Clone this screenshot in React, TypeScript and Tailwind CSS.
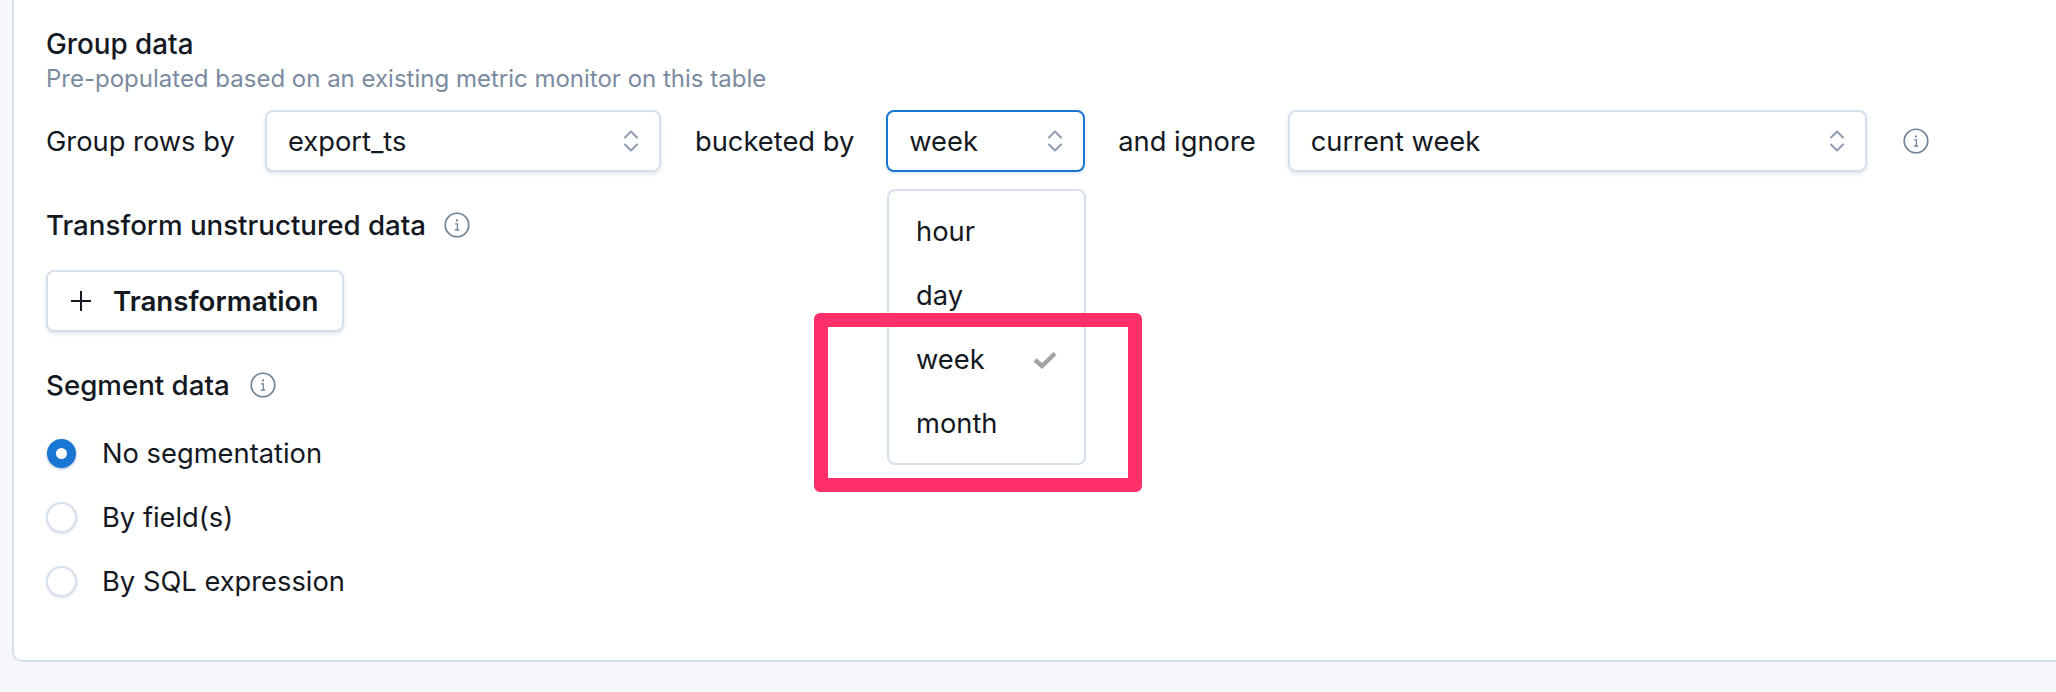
import React from "react";

const Chevrons = () => (
  <svg width="16" height="24" viewBox="0 0 16 24" fill="none" stroke="#8c9db1" strokeWidth="2" strokeLinecap="round" strokeLinejoin="round" className="shrink-0">
    <path d="M2 8.5 L8 2.5 L14 8.5" />
    <path d="M2 15.5 L8 21.5 L14 15.5" />
  </svg>
);

const Info = () => (
  <svg width="26" height="26" viewBox="0 0 26 26" fill="none" className="shrink-0">
    <circle cx="13" cy="13" r="11.75" stroke="#718297" strokeWidth="1.7" />
    <circle cx="13" cy="8.4" r="1.1" fill="#718297" />
    <path d="M11 11.8 H13.4 V17.8 M10.9 18 H15.2" stroke="#718297" strokeWidth="1.3" />
  </svg>
);

const Select = ({ value, width, focused }: { value: string; width: string; focused?: boolean }) => (
  <div
    className={`${width} h-[62px] shrink-0 rounded-[8px] bg-white flex items-center justify-between pl-[21px] pr-[20px] ${
      focused
        ? "border-2 border-[#1976d2] shadow-[0_2px_3px_rgba(25,118,210,0.15)]"
        : "border-2 border-[#d5e0ec] shadow-[0_2px_4px_rgba(120,145,175,0.22)]"
    }`}
  >
    <span className="pt-[2px]">{value}</span>
    <Chevrons />
  </div>
);

const Radio = ({ label, checked }: { label: string; checked?: boolean }) => (
  <div className="h-[64px] flex items-center">
    {checked ? (
      <span className="w-[29px] h-[29px] ml-[1px] mr-[26px] rounded-full bg-[#1976d2] flex items-center justify-center shadow-[0_1px_3px_rgba(60,100,150,0.45)]">
        <span className="w-[11px] h-[11px] rounded-full bg-white" />
      </span>
    ) : (
      <span className="w-[31px] h-[31px] mr-[25px] rounded-full bg-white border-2 border-[#d5e0ec] shadow-[0_1px_3px_rgba(120,145,175,0.25)]" />
    )}
    <span className="pt-[2px]">{label}</span>
  </div>
);

export default function App() {
  return (
    <div className="h-[692px] overflow-hidden bg-[#f5f7fb] pl-[12px] relative text-[27.3px] leading-[32px] text-[#14181f] font-['Inter',sans-serif]">
      <div className="h-[662px] bg-white border-l-2 border-b-2 border-[#d5e0ec] rounded-bl-[10px] pl-[32px] pt-[28px]">
        <div className="font-[450] text-[27.8px] h-[32px]">Group data</div>
        <div className="mt-[3px] h-[32px] text-[24px] text-[#7a8ba0]">Pre-populated based on an existing metric monitor on this table</div>

        <div className="mt-[15px] flex items-center gap-[32px]">
          <span className="w-[187px] pt-[2px] whitespace-nowrap">Group rows by</span>
          <Select value="export_ts" width="w-[396px]" />
          <span className="ml-[2px] pt-[2px]">bucketed by</span>
          <Select value="week" width="w-[199px]" focused />
          <span className="ml-[1px] pt-[2px]">and ignore</span>
          <div className="flex items-center gap-[36px]">
            <Select value="current week" width="w-[579px]" />
            <Info />
          </div>
        </div>

        <div className="mt-[37px] flex items-center gap-[18px] font-[450] text-[27.7px]">
          <span>Transform unstructured data</span>
          <Info />
        </div>

        <button className="mt-[29px] w-[298px] h-[62px] rounded-[8px] bg-white border-2 border-[#d5e0ec] shadow-[0_2px_4px_rgba(120,145,175,0.22)] flex items-center pl-[21px] font-semibold text-[27.7px]">
          <svg width="24" height="24" viewBox="0 0 24 24" fill="none" stroke="#14181f" strokeWidth="2" className="shrink-0 mr-[20px]">
            <path d="M12 2 V22 M2 12 H22" />
          </svg>
          Transformation
        </button>

        <div className="mt-[37px] flex items-center gap-[20px] font-[450] text-[27.7px]">
          <span>Segment data</span>
          <Info />
        </div>

        <div className="mt-[20px] flex flex-col">
          <Radio label="No segmentation" checked />
          <Radio label="By field(s)" />
          <Radio label="By SQL expression" />
        </div>
      </div>

      <div className="absolute left-[887px] top-[189px] w-[199px] h-[276px] bg-white border-2 border-[#d5e0ec] rounded-[8px] py-[9px]">
        <div className="h-[64px] flex items-center pl-[27px]">hour</div>
        <div className="h-[64px] flex items-center pl-[27px]">day</div>
        <div className="h-[64px] flex items-center justify-between pl-[27px] pr-[27px]">
          <span>week</span>
          <svg width="24" height="18" viewBox="0 0 24 18" fill="none" stroke="#a3a3a3" strokeWidth="4.5" className="shrink-0">
            <path d="M2 9 L9 15 L22 2.5" />
          </svg>
        </div>
        <div className="h-[64px] flex items-center pl-[27px]">month</div>
      </div>

      <div className="absolute left-[814px] top-[313px] w-[328px] h-[179px] border-[14px] border-[#ff3069] rounded-[6px] pointer-events-none" />
    </div>
  );
}
